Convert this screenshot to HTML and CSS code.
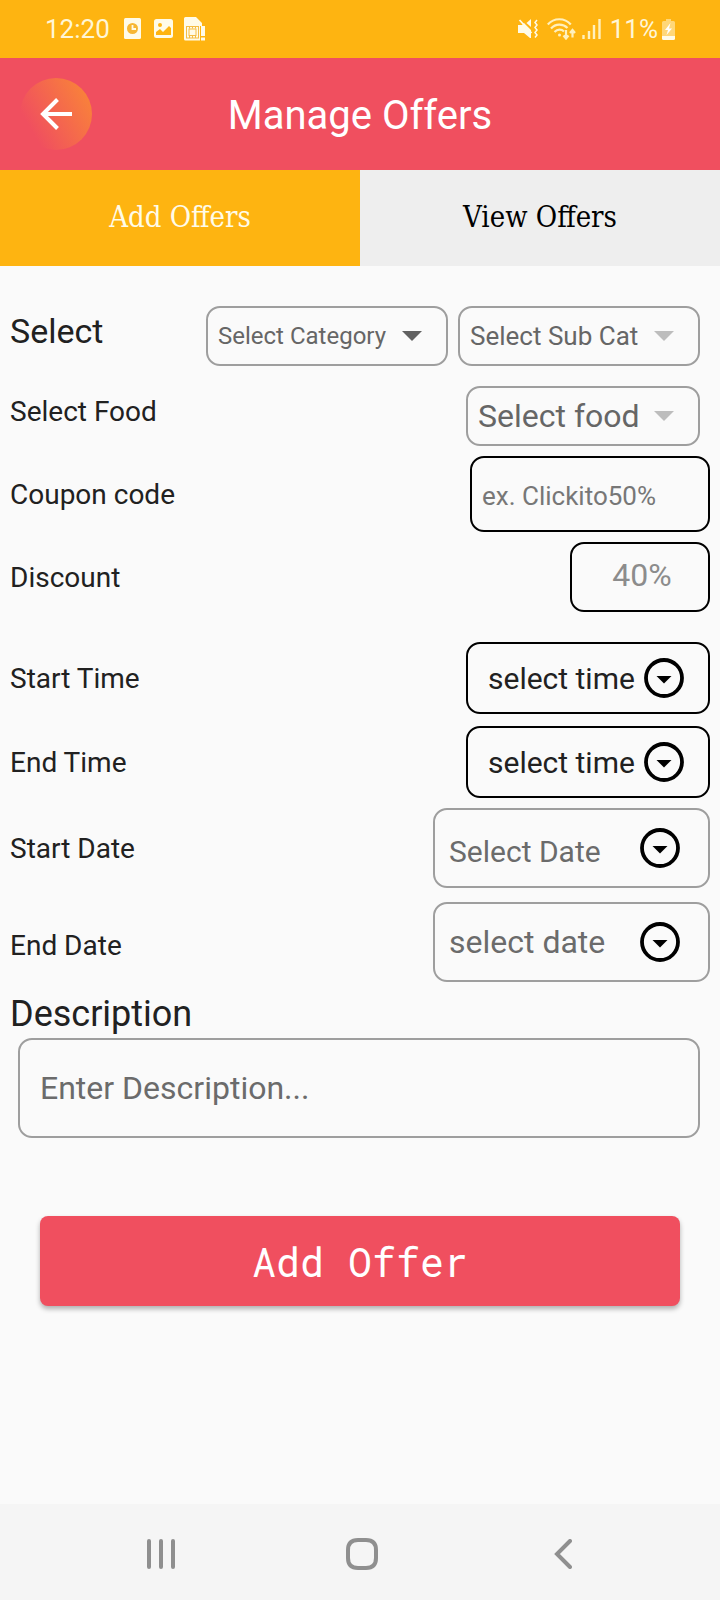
FILE: index.html
```html
<!DOCTYPE html>
<html lang="en">
<head>
<meta charset="utf-8">
<meta name="viewport" content="width=device-width, initial-scale=1">
<title>Manage Offers</title>
<link rel="stylesheet" href="styles.css">
</head>
<body>
<div class="statusbar">
  <div class="status-group">
    <span class="clock">12:20</span>
    <svg class="ic-alarm" width="17" height="22" viewBox="0 0 17 22"><rect width="17" height="21" rx="1.500" fill="#fffbe8"/><circle cx="8.500" cy="10.500" r="5.500" fill="#f7b733"/><path d="M8.500 7v4h3.500" fill="none" stroke="#fffbe8" stroke-width="1.800"/></svg>
    <svg class="ic-image" width="19" height="20" viewBox="0 0 19 20"><rect width="19" height="19" rx="2.500" fill="#fffbe8"/><circle cx="6" cy="6" r="2" fill="#feb411"/><path d="M2 16v-3l4-3 3 3 6-6 2 2v7z" fill="#feb411"/></svg>
    <svg class="ic-sim" width="21" height="24" viewBox="0 0 21 24"><path d="M1.500 0H12l6 6v3h-2v14.500H1.500A1.500 1.500 0 0 1 0 22V1.500A1.500 1.500 0 0 1 1.500 0z" fill="#fffbe8"/><rect x="2.500" y="9.500" width="12" height="11.500" fill="none" stroke="#f5bd45"/><rect x="5" y="12" width="7" height="6.500" fill="none" stroke="#f5bd45"/><path d="M5.500 9.500v2M8.500 9.500v2M11.500 9.500v2M5.500 19v2M8.500 19v2M11.500 19v2" stroke="#f5bd45"/><path d="M17 9h4v10h-4zM17 20.500h4V23.500h-4z" fill="#fffbe8"/></svg>
  </div>
  <div class="status-group">
    <svg class="ic-mute" width="20" height="20" viewBox="0 0 20 20"><path d="M0 6h4l2-2 7 7V19h-1l-6-5H0z" fill="#fffbe8"/><path d="M13 0v8L8.500 4z" fill="#fffbe8"/><path d="M1.500 1l12 13" stroke="#fffbe8" stroke-width="1.800"/><path d="M19 1l-2 2.500 2 2.500-2 2.500 2 2.500-2 2.500 2 2.500-2 2.500" fill="none" stroke="#fffbe8" stroke-width="1.500"/></svg>
    <svg class="ic-wifi" width="29" height="22" viewBox="0 0 29 22" fill="none" stroke="#fff0bd" stroke-width="2.200"><path d="M.8 6.500c6-7 17-7 23 0M4 10.500c4.500-5 12-5 16.500-.5M7.500 14c3-3 7-3 9.500-.5"/><circle cx="12.500" cy="17" r="1.500" fill="#fff0bd" stroke="none"/><path d="M19 12v8M16.500 17.500L19 20.500l2.500-3M25.500 19.500v-7M23 15l2.500-3L28 15"/></svg>
    <svg class="ic-signal" width="19" height="20" viewBox="0 0 19 20" stroke="#fff0bd" stroke-width="2.400"><path d="M1.500 20v-4M7 20v-8M12 20V6M17.500 20V0"/></svg>
    <span class="battery-text">11%</span>
    <svg class="ic-battery" width="13" height="21" viewBox="0 0 13 21"><path d="M4 0h5v2h2.500Q13 2 13 3.500V17H0V3.500Q0 2 1.500 2H4z" fill="#ffd778"/><path d="M0 17h13v2.500Q13 21 11.500 21h-10Q0 21 0 19.500z" fill="#fffbe8"/><path d="M8.500 4L3 11h3l-1.500 5L10 9.500H7z" fill="#fff"/></svg>
  </div>
</div>

<header class="appbar">
  <button class="back" type="button" aria-label="Back">
    <svg width="32" height="32" viewBox="0 0 32 32" fill="none" stroke="#fff" stroke-width="4"><path d="M32 16H3M17.500 1.500L3 16l14.500 14.500"/></svg>
  </button>
  <h1 class="title">Manage Offers</h1>
</header>

<div class="tabs" role="tablist">
  <button class="tab tab-active" type="button" role="tab" aria-selected="true">Add Offers</button>
  <button class="tab" type="button" role="tab" aria-selected="false">View Offers</button>
</div>

<main class="content">
  <form class="form">
    <div class="row row-category">
      <label class="label label-lg label-raised" for="category">Select</label>
      <div class="pickers">
        <div class="picker">
          <select class="select text-sm" id="category"><option>Select Category</option></select>
          <svg class="caret" width="20" height="10" viewBox="0 0 20 10"><path d="M0 0h20L10 10z" fill="#616161"/></svg>
        </div>
        <div class="picker">
          <select class="select text-md" aria-label="Sub category"><option>Select Sub Cat</option></select>
          <svg class="caret" width="20" height="10" viewBox="0 0 20 10"><path d="M0 0h20L10 10z" fill="#bdbdbd"/></svg>
        </div>
      </div>
    </div>
    <div class="row row-food">
      <label class="label label-raised" for="food">Select Food</label>
      <div class="pickers">
        <div class="picker picker-food">
          <select class="select text-xl" id="food"><option>Select food</option></select>
          <svg class="caret" width="20" height="10" viewBox="0 0 20 10"><path d="M0 0h20L10 10z" fill="#bdbdbd"/></svg>
        </div>
      </div>
    </div>
    <div class="row">
      <label class="label" for="coupon">Coupon code</label>
      <input class="box coupon text-md" id="coupon" type="text" placeholder="ex. Clickito50%">
    </div>
    <div class="row row-discount">
      <label class="label" for="discount">Discount</label>
      <input class="box discount text-xl" id="discount" type="text" placeholder="40%">
    </div>
    <div class="row row-time">
      <label class="label" for="start-time">Start Time</label>
      <button class="box time text-lg" id="start-time" type="button">select time
        <svg width="40" height="40" viewBox="0 0 40 40"><circle cx="20" cy="20" r="18" fill="none" stroke="#000" stroke-width="3.800"/><path d="M12.500 18h15L20 25.500z"/></svg>
      </button>
    </div>
    <div class="row">
      <label class="label" for="end-time">End Time</label>
      <button class="box time text-lg" id="end-time" type="button">select time
        <svg width="40" height="40" viewBox="0 0 40 40"><circle cx="20" cy="20" r="18" fill="none" stroke="#000" stroke-width="3.800"/><path d="M12.500 18h15L20 25.500z"/></svg>
      </button>
    </div>
    <div class="row row-date">
      <label class="label" for="start-date">Start Date</label>
      <div class="box date">
        <input class="date-input date-input-low text-lg" id="start-date" type="text" placeholder="Select Date">
        <button class="icon-button" type="button" aria-label="Pick start date">
          <svg width="40" height="40" viewBox="0 0 40 40"><circle cx="20" cy="20" r="18" fill="none" stroke="#000" stroke-width="3.800"/><path d="M12.500 18h15L20 25.500z"/></svg>
        </button>
      </div>
    </div>
    <div class="row">
      <label class="label label-lowered" for="end-date">End Date</label>
      <div class="box date">
        <input class="date-input text-xl" id="end-date" type="text" placeholder="select date">
        <button class="icon-button" type="button" aria-label="Pick end date">
          <svg width="40" height="40" viewBox="0 0 40 40"><circle cx="20" cy="20" r="18" fill="none" stroke="#000" stroke-width="3.800"/><path d="M12.500 18h15L20 25.500z"/></svg>
        </button>
      </div>
    </div>
    <label class="label label-description" for="description">Description</label>
    <input class="box description text-xl" id="description" type="text" placeholder="Enter Description...">
    <button class="submit" type="button">Add Offer</button>
  </form>
</main>

<nav class="navbar" aria-label="System">
  <button class="nav-button" type="button" aria-label="Recents"><svg width="28" height="30" viewBox="0 0 28 30" stroke="#8f8f8f" stroke-width="4" stroke-linecap="round"><path d="M2 2v26M14 2v26M26 2v26"/></svg></button>
  <button class="nav-button" type="button" aria-label="Home"><svg width="32" height="32" viewBox="0 0 32 32" fill="none" stroke="#8f8f8f" stroke-width="4"><path d="M12 2h8q10 0 10 10v8q0 10-10 10h-8Q2 30 2 20v-8Q2 2 12 2z"/></svg></button>
  <button class="nav-button" type="button" aria-label="Back"><svg width="18" height="30" viewBox="0 0 18 30" fill="none" stroke="#8f8f8f" stroke-width="4" stroke-linecap="round"><path d="M16 2L3 15l13 13"/></svg></button>
</nav>
</body>
</html>
```
FILE: styles.css
```css
* {
  box-sizing: border-box;
}

body {
  margin: 0;
  min-height: 100vh;
  display: flex;
  flex-direction: column;
  background: #fafafa;
  color: #212121;
  font-family: Roboto, sans-serif;
}

button,
input,
select {
  margin: 0;
  padding: 0;
  border: 0;
  border-radius: 0;
  background: none;
  color: inherit;
  font-family: inherit;
}

svg {
  display: block;
  flex: none;
}

/* Status bar */
.statusbar {
  display: flex;
  justify-content: space-between;
  height: 58px;
  padding: 0 45px;
  background: #feb411;
  color: #fff6d6;
  font-size: 26px;
}

.status-group {
  display: flex;
  align-items: center;
}

.ic-alarm {
  margin-left: 14px;
}

.ic-image {
  margin-left: 13px;
}

.ic-sim {
  margin-left: 11px;
}

.ic-wifi {
  margin-left: 9px;
}

.ic-signal {
  margin-left: 6px;
}

.battery-text {
  margin-left: 9px;
}

.ic-battery {
  margin-left: 4px;
}

/* App bar */
.appbar {
  display: grid;
  grid-template-columns: 72px 1fr 72px;
  align-items: center;
  height: 112px;
  padding: 0 20px;
  background: #f04f5f;
  color: #fff;
}

.back {
  display: flex;
  align-items: center;
  justify-content: center;
  width: 72px;
  height: 72px;
  border-radius: 50%;
  background: linear-gradient(60deg, #f04f5f 20%, #fa8a34 100%);
}

.title {
  margin: 0;
  padding-top: 2px;
  font-size: 40px;
  font-weight: 400;
  text-align: center;
}

/* Tabs */
.tabs {
  display: grid;
  grid-template-columns: 1fr 1fr;
  height: 96px;
}

.tab {
  padding-bottom: 2px;
  background: #eeeeee;
  color: #000;
  font-family: "DejaVu Serif Condensed", "DejaVu Serif", serif;
  font-size: 29px;
}

.tab-active {
  background: #feb411;
  color: #fffbe8;
}

/* Form */
.content {
  flex: 1;
  padding: 40px 10px;
}

.form {
  display: flex;
  flex-direction: column;
}

.row {
  display: flex;
  align-items: center;
  justify-content: space-between;
  margin-bottom: 10px;
}

.row-category {
  margin-bottom: 20px;
}

.row-discount {
  margin-bottom: 30px;
}

.row-time {
  margin-bottom: 12px;
}

.row-date {
  margin-bottom: 14px;
}

.label {
  font-size: 28px;
}

.label-lg {
  font-size: 34px;
}

.label-raised {
  padding-bottom: 10px;
}

.label-lowered {
  padding-top: 6px;
}

.text-sm {
  font-size: 24px;
}

.text-md {
  font-size: 26px;
}

.text-lg {
  font-size: 30px;
}

.text-xl {
  font-size: 32px;
}

.pickers {
  display: flex;
  gap: 10px;
  padding-right: 10px;
}

.picker {
  display: grid;
  align-items: center;
  width: 242px;
  height: 60px;
  border: 2px solid #9e9e9e;
  border-radius: 14px;
}

.picker-food {
  width: 234px;
}

.select {
  grid-area: 1 / 1;
  width: 100%;
  height: 56px;
  padding-left: 10px;
  appearance: none;
  color: #666;
}

.caret {
  grid-area: 1 / 1;
  justify-self: end;
  margin-right: 24px;
  pointer-events: none;
}

.box {
  border: 2px solid #000;
  border-radius: 14px;
}

.box::placeholder,
.date-input::placeholder {
  color: #6b6b6b;
  opacity: 1;
}

.coupon {
  width: 240px;
  height: 76px;
  padding: 4px 10px 0;
}

.coupon::placeholder {
  color: #777;
}

.discount {
  width: 140px;
  height: 70px;
  padding: 0 0 4px 4px;
  text-align: center;
}

.discount::placeholder {
  color: #8c8c8c;
}

.time {
  display: flex;
  align-items: center;
  justify-content: space-between;
  width: 244px;
  height: 72px;
  padding: 0 24px 0 20px;
}

.date {
  display: flex;
  align-items: center;
  justify-content: space-between;
  width: 277px;
  height: 80px;
  padding: 0 28px 0 14px;
  border-color: #9e9e9e;
}

.date-input {
  width: 170px;
  height: 60px;
}

.date-input-low {
  padding-top: 6px;
}

.label-description {
  padding-bottom: 2px;
  font-size: 36px;
  line-height: 44px;
}

.description {
  height: 100px;
  margin: 0 10px 78px 8px;
  padding: 0 20px;
  border-color: #9e9e9e;
}

.submit {
  height: 90px;
  margin: 0 30px;
  border-radius: 8px;
  background: #f04f5f;
  box-shadow: 0 3px 5px rgba(0, 0, 0, 0.3);
  color: #fff;
  font-family: "Roboto Mono", "DejaVu Sans Mono", monospace;
  font-size: 40px;
}

/* System navigation */
.navbar {
  display: grid;
  grid-template-columns: repeat(3, 1fr);
  height: 96px;
  padding: 4px 56px 0 60px;
  background: #f5f5f5;
}

.nav-button {
  display: flex;
  align-items: center;
  justify-content: center;
}
```
